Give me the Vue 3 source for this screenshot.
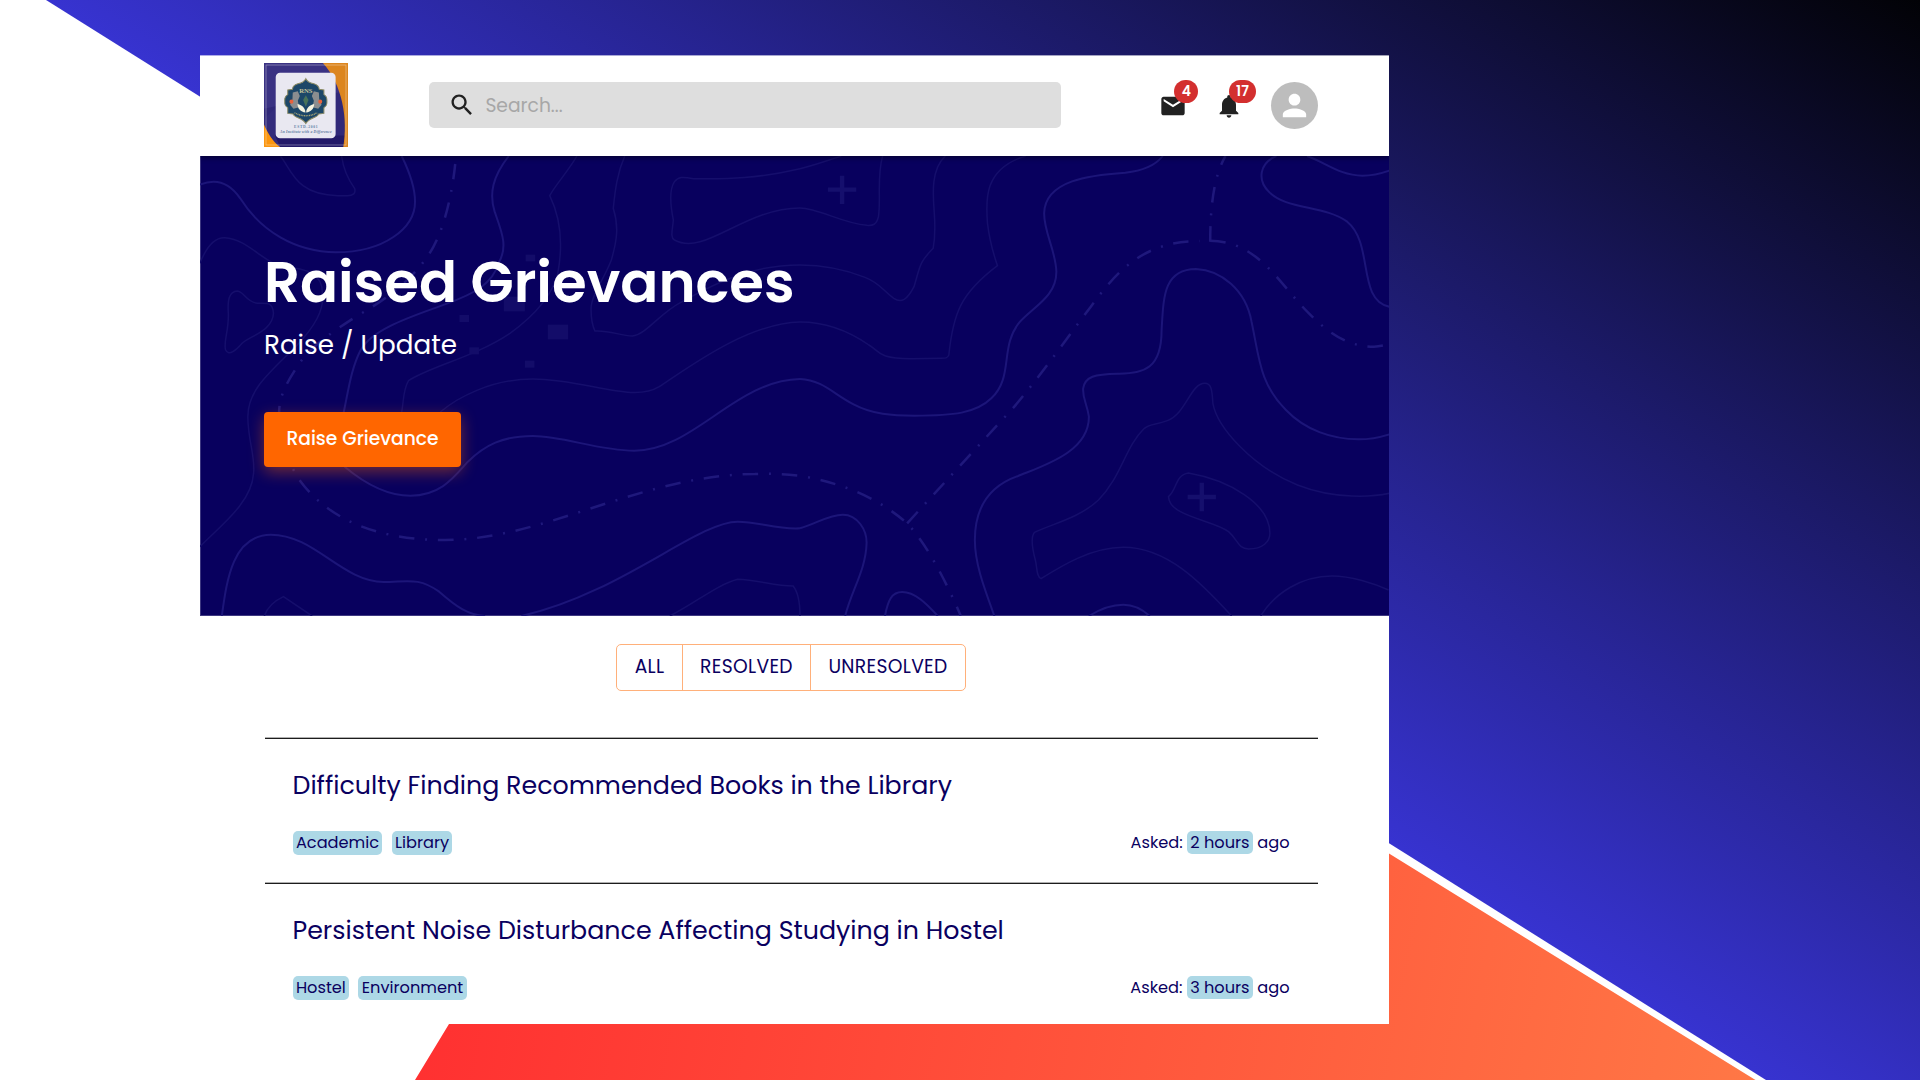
<script setup>
const filters = ['ALL', 'RESOLVED', 'UNRESOLVED']

const grievances = [
  {
    title: 'Difficulty Finding Recommended Books in the Library',
    tags: ['Academic', 'Library'],
    asked: '2 hours',
  },
  {
    title: 'Persistent Noise Disturbance Affecting Studying in Hostel',
    tags: ['Hostel', 'Environment'],
    asked: '3 hours',
  },
]
</script>

<template>
  <div class="page">
    <svg class="backdrop" width="1920" height="1080" viewBox="0 0 1920 1080" aria-hidden="true">
      <defs>
        <linearGradient id="night" gradientUnits="userSpaceOnUse" x1="1390" y1="844" x2="1920" y2="0">
          <stop offset="0" stop-color="#3733d0" />
          <stop offset="1" stop-color="#020206" />
        </linearGradient>
        <linearGradient id="sunset" gradientUnits="userSpaceOnUse" x1="430" y1="1020" x2="2190" y2="1360">
          <stop offset="0" stop-color="#ff3131" />
          <stop offset="1" stop-color="#ff914d" />
        </linearGradient>
      </defs>
      <polygon points="46,0 1920,0 1920,1080 1766,1080" fill="url(#night)" />
      <polygon points="449,1024 900,550 1389,853.5 1755.5,1080 415,1080" fill="url(#sunset)" />
    </svg>

    <main class="card">
      <header class="topbar">
        <svg class="logo" viewBox="27 24 251 250" preserveAspectRatio="none">
          <rect x="27" y="24" width="251" height="250" fill="#332c7c" />
          <path d="M27 24H205C225 45 245 75 255 110L27 160Z" fill="#433b8c" />
          <path d="M27 24H278V274H240V240H60V160L27 190Z" fill="#2b2374" opacity=".35" />
          <path d="M60 240H270V274H75Z" fill="#231a68" />
          <path d="M203 24H278V274H264C278 190 262 90 203 24Z" fill="#dc861f" />
          <path d="M27 207C38 232 52 256 75 274H27Z" fill="#fb960f" />
          <rect x="33" y="30" width="239" height="238" fill="none" stroke="#fff" stroke-opacity=".4" stroke-width="2.5" />
          <rect x="62" y="53" width="179" height="195" rx="13" fill="#e9e8f1" />
          <path d="M152 71C157 82 166 84 176 86C186 89 191 93 192 102L206 104V118C217 124 215 134 215 138C215 144 217 150 206 157V174L190 176C186 188 163 186 152 204C141 186 118 188 114 176L98 174V157C87 150 89 144 89 138C89 134 87 124 98 118V104L112 102C113 93 118 89 128 86C138 84 147 82 152 71Z" fill="#1d4768" stroke="#8b8a63" stroke-width="3" />
          <path d="M113 112L128 108L134 122L128 136L132 156L115 160L105 148L112 132ZM191 112L176 108L170 122L176 136L172 156L189 160L199 148L192 132Z" fill="#8a8d8f" />
          <circle cx="109" cy="139" r="6" fill="#e8613b" />
          <circle cx="195" cy="139" r="6" fill="#e8613b" />
          <path d="M152 120L160 134L152 154L144 134Z" fill="#49735a" />
          <path d="M127 146C142 150 150 158 151 171C136 170 128 160 127 146ZM177 146C162 150 154 158 153 171C168 170 176 160 177 146Z" fill="#f5f3df" />
          <path d="M118 172C140 184 164 184 186 172" fill="none" stroke="#aaa774" stroke-width="4" stroke-dasharray="3 2" />
          <text x="152" y="113" text-anchor="middle" class="logo-serif" font-size="20" fill="#c6c298">RNS</text>
          <text x="152" y="216" text-anchor="middle" class="logo-serif" font-size="11" fill="#6383a8" textLength="70">ESTD-2001</text>
          <text x="152" y="232" text-anchor="middle" class="logo-script" font-size="11" fill="#5b769c" textLength="154">An Institute with a Difference</text>
        </svg>

        <div class="search">
          <svg class="icon" viewBox="0 0 24 24"><path d="M15.5 14h-.79l-.28-.27C15.41 12.59 16 11.11 16 9.5 16 5.91 13.09 3 9.5 3S3 5.91 3 9.5 5.91 16 9.5 16c1.61 0 3.09-.59 4.23-1.57l.27.28v.79l5 4.99L20.49 19l-4.99-5zm-6 0C7.01 14 5 11.99 5 9.5S7.01 5 9.5 5 14 7.01 14 9.5 11.99 14 9.5 14z" /></svg>
          <span>Search...</span>
        </div>

        <div class="actions">
          <div class="action mail">
            <svg class="icon" viewBox="0 0 24 24"><path d="M20 4H4c-1.1 0-1.99.9-1.99 2L2 18c0 1.1.9 2 2 2h16c1.1 0 2-.9 2-2V6c0-1.1-.9-2-2-2zm0 4l-8 5-8-5V6l8 5 8-5v2z" /></svg>
            <span class="badge">4</span>
          </div>
          <div class="action bell">
            <svg class="icon" viewBox="0 0 24 24"><path d="M12 22c1.1 0 2-.9 2-2h-4c0 1.1.89 2 2 2zm6-6v-5c0-3.07-1.64-5.64-4.5-6.32V4c0-.83-.67-1.5-1.5-1.5s-1.5.67-1.5 1.5v.68C7.63 5.36 6 7.92 6 11v5l-2 2v1h16v-1l-2-2z" /></svg>
            <span class="badge wide">17</span>
          </div>
          <div class="avatar">
            <svg viewBox="0 0 24 24"><path d="M12 12c2.21 0 4-1.79 4-4s-1.79-4-4-4-4 1.79-4 4 1.79 4 4 4zm0 2c-2.67 0-8 1.34-8 4v2h16v-2c0-2.66-5.33-4-8-4z" /></svg>
          </div>
        </div>
      </header>

      <section class="hero">
        <svg class="contours" width="1189" height="460" viewBox="200 156 1189 460" aria-hidden="true">
          <g transform="translate(200 150) scale(.38265 .33333)">
            <g class="faint">
              <path d="M210 18C240 60 250 135 360 137L385 137C400 137 408 130 404 115C385 85 375 60 370 18" />
              <path d="M0 340C20 280 45 262 65 263C120 265 170 340 215 350C280 355 320 370 320 430C325 480 300 530 250 590C180 670 125 720 125 800C125 870 145 920 140 970C135 1060 50 1130 0 1190" />
              <path d="M98 423C75 425 72 450 74 490C76 540 60 580 67 600C75 620 95 600 110 580C125 560 190 545 192 490C190 455 175 460 150 460C120 455 115 425 98 423Z" />
              <path d="M985 18C965 60 925 110 914 137C945 210 948 290 935 370C920 440 870 500 810 550C720 620 600 650 545 692C530 720 532 760 527 786" />
              <path d="M1110 18C1090 70 1085 120 1080 175C1095 230 1090 270 1075 330C1055 390 1020 440 1022 480C1022 510 1025 525 1032 543C1070 540 1100 558 1130 558C1165 555 1200 490 1260 455C1360 390 1450 345 1568 345" />
              <path d="M1568 516C1430 520 1280 650 1200 710C1130 760 1010 688 870 687C760 687 670 745 628 786" />
              <path d="M1568 56C1460 85 1380 88 1290 86C1260 80 1250 80 1240 95C1225 120 1230 170 1237 210C1235 240 1228 262 1240 270C1320 320 1420 175 1568 174" />
              <path d="M168 1398C175 1375 190 1355 218 1340L293 1398" />
              <path d="M1228 1398C1300 1355 1350 1305 1405 1288C1460 1290 1500 1308 1550 1308C1562 1325 1568 1350 1568 1398" />
            </g>
            <g class="strong">
              <path d="M0 104C40 85 75 95 105 145C160 245 250 305 355 307C480 307 562 235 562 155C562 110 545 60 527 18" />
              <path d="M807 18C765 80 755 130 770 185C790 250 805 290 780 340C765 400 720 430 640 463C560 497 450 535 420 600C395 655 388 720 375 790C365 850 350 910 378 950C430 1000 490 1037 550 1037C630 1037 665 980 700 935C745 885 790 858 870 858C950 858 1040 902 1135 902C1290 902 1400 690 1568 687" />
              <path d="M57 1398C70 1290 85 1156 185 1154C300 1154 370 1295 480 1296C540 1296 570 1280 625 1325C670 1370 700 1395 745 1398" />
              <path d="M840 1398C1100 1330 1300 1115 1405 1115C1460 1115 1510 1140 1568 1135" />
            </g>
            <path class="route" d="M667 42C660 120 640 240 600 310C560 380 500 440 410 498C340 550 290 590 260 640C230 690 205 740 207 790C210 850 220 920 260 990C330 1100 450 1170 640 1170C900 1170 1150 975 1450 972C1490 970 1530 973 1568 977C1678 1000 1768 1040 1848 1120C1898 1180 1948 1290 1988 1397" />
            <g class="blocks">
              <rect x="851" y="314" width="25" height="20" />
              <rect x="794" y="440" width="55" height="44" />
              <rect x="678" y="495" width="25" height="21" />
              <rect x="909" y="524" width="53" height="44" />
              <rect x="704" y="592" width="25" height="21" />
              <rect x="849" y="632" width="25" height="21" />
            </g>
          </g>
          <g transform="translate(800 150) scale(.38265 .33333)">
            <g class="faint">
              <path d="M0 56C40 45 75 30 108 18" />
              <path d="M216 18C200 80 212 150 205 200C200 225 190 227 175 226C110 220 50 175 0 174" />
              <path d="M380 18C340 60 348 140 351 190C354 240 352 270 348 295C310 340 315 345 298 410C280 450 265 460 245 445C215 420 210 400 170 382C110 355 60 345 0 345" />
              <path d="M590 18C480 55 485 150 490 220C495 270 505 310 516 347C420 430 400 490 389 615C385 625 380 625 370 625L290 626C200 625 210 605 180 585C130 545 70 516 0 516" />
              <path d="M1540 1030C1500 1040 1400 1050 1300 1005C1180 950 1090 830 1079 760C1077 720 1075 700 1058 700C1020 700 1010 790 960 812C930 825 915 820 900 835C850 890 840 980 780 1050C730 1105 650 1125 613 1147C603 1160 608 1200 615 1230C620 1250 617 1280 630 1286C680 1250 760 1192 845 1192C960 1192 1050 1300 1128 1398" />
              <path d="M1015 969C980 975 985 1020 963 1040C965 1100 1080 1110 1120 1145C1145 1170 1145 1197 1172 1197C1210 1197 1228 1175 1228 1150C1228 1060 1120 990 1015 969Z" />
              <path d="M1204 1398C1240 1330 1310 1278 1390 1278C1440 1278 1500 1300 1538 1320" />
            </g>
            <g class="strong">
              <path d="M0 687C60 690 90 735 140 763C190 793 240 797 300 797C400 797 460 790 500 745C560 680 520 590 575 515C610 470 670 440 670 365C668 300 638 250 638 190C640 90 760 75 850 68C900 62 930 45 948 18" />
              <path d="M508 1398C480 1310 457 1240 457 1170C457 1080 490 1010 570 978C640 945 755 905 755 800C750 760 738 745 740 715C745 680 770 672 830 671C900 672 945 655 945 540C950 440 950 358 1035 357C1100 360 1165 420 1180 515C1200 620 1200 700 1270 780C1320 840 1390 868 1460 868C1490 868 1515 862 1540 853" />
              <path d="M1245 18C1200 40 1195 90 1225 125C1270 180 1370 165 1430 215C1500 280 1455 450 1540 470" />
              <path d="M1325 18C1370 35 1410 77 1470 77C1500 77 1520 70 1540 62" />
              <path d="M0 1135C45 1120 75 1094 112 1094C150 1094 175 1140 174 1180C172 1260 135 1320 118 1398" />
              <path d="M222 1398C230 1350 240 1326 267 1326C300 1326 330 1360 360 1398" />
              <path d="M755 1398C780 1380 810 1364 845 1364C875 1364 895 1378 914 1398" />
            </g>
            <path class="route" d="M280 1120C400 970 480 870 560 770C640 660 700 560 760 470C830 360 900 273 1045 273" />
            <path class="route" d="M1072 272C1200 275 1250 400 1330 490C1390 560 1440 590 1500 590C1515 590 1530 585 1540 582" />
            <path class="route" d="M1072 275C1072 180 1080 80 1112 18" />
            <path class="cross" d="M73 119H147M110 77V162M1013 1041H1087M1050 998V1084" />
          </g>
        </svg>

        <div class="hero-copy">
          <h1>Raised Grievances</h1>
          <p>Raise / Update</p>
          <button type="button">Raise Grievance</button>
        </div>
      </section>

      <section class="content">
        <div class="filters">
          <button v-for="f in filters" :key="f" type="button" :class="f.toLowerCase()">{{ f }}</button>
        </div>

        <article v-for="g in grievances" :key="g.title" class="item">
          <h2>{{ g.title }}</h2>
          <div class="meta">
            <div class="tags">
              <span v-for="t in g.tags" :key="t" class="tag">{{ t }}</span>
            </div>
            <div class="asked">
              <span>Asked:</span>
              <span class="time">{{ g.asked }}</span>
              <span>ago</span>
            </div>
          </div>
        </article>
      </section>
    </main>
  </div>
</template>

<style>
body {
  margin: 0;
  background: #fff;
}
</style>

<style scoped>
.page {
  position: relative;
  box-sizing: border-box;
  width: 1920px;
  height: 1080px;
  padding: 56px 0 0 200px;
  overflow: hidden;
  background: #fff;
  font-family: Poppins, Inter, 'Noto Sans', sans-serif;
}
.backdrop {
  position: absolute;
  inset: 0;
}
.card {
  position: relative;
  width: 1189px;
  height: 968px;
  background: #fff;
  box-shadow: 0 -1px 0 rgba(255, 255, 255, 0.6);
}
.topbar {
  position: relative;
  z-index: 1;
  box-sizing: border-box;
  display: flex;
  align-items: center;
  height: 100px;
  padding: 0 71px 0 64px;
  background: #fff;
  box-shadow: 0 2px 5px rgba(0, 0, 0, 0.45);
  clip-path: inset(0 0 -10px 0);
}
.logo {
  width: 84px;
  height: 84px;
  margin-top: -2px;
}
.logo-serif {
  font-family: 'Liberation Serif', serif;
  font-weight: 700;
}
.logo-script {
  font-family: 'Liberation Serif', serif;
  font-style: italic;
  font-weight: 700;
}
.search {
  box-sizing: border-box;
  display: flex;
  align-items: center;
  width: 632px;
  height: 46px;
  margin: -2px 0 0 81.4px;
  padding-left: 18.6px;
  border-radius: 5px;
  background: #dedede;
  color: #a7a7a7;
  font-size: 18.7px;
}
.search span {
  margin-left: 9.4px;
}
.icon {
  width: 28px;
  height: 28px;
  fill: #212121;
}
.actions {
  display: flex;
  align-items: center;
  margin: -1px 0 0 97.6px;
}
.action {
  position: relative;
  display: flex;
}
.bell {
  margin-left: 28px;
}
.badge {
  position: absolute;
  top: -12px;
  left: 15.5px;
  width: 24px;
  height: 23px;
  border-radius: 12px;
  background: #d32f2f;
  color: #fff;
  font-size: 14px;
  font-weight: 600;
  line-height: 23px;
  text-align: center;
}
.badge.wide {
  left: 14px;
  width: 27px;
}
.avatar {
  display: flex;
  align-items: center;
  justify-content: center;
  width: 47px;
  height: 47px;
  margin-left: 28px;
  border-radius: 50%;
  background: #bdbdbd;
}
.avatar svg {
  width: 35px;
  height: 35px;
  fill: #fff;
}
.hero {
  position: relative;
  height: 460px;
  overflow: hidden;
  background: #08005e;
  box-shadow: inset 1px -1px 0 rgba(255, 255, 255, 0.22);
}
.contours {
  position: absolute;
  inset: 0;
}
.contours path {
  fill: none;
  vector-effect: non-scaling-stroke;
}
.faint path {
  stroke: #150e6c;
  stroke-width: 1.5;
}
.strong path {
  stroke: #1c1579;
  stroke-width: 2;
}
.contours .route {
  stroke: #1f187c;
  stroke-width: 2.5;
  stroke-dasharray: 15.5 10.8 2 10.8;
}
.contours .cross {
  stroke: #150f6d;
  stroke-width: 4.4;
}
.blocks {
  fill: #130c69;
}
.hero-copy {
  position: relative;
  display: flex;
  flex-direction: column;
  align-items: flex-start;
  padding: 92px 0 0 64px;
  color: #fff;
}
h1 {
  margin: 0;
  font-size: 56.2px;
  font-weight: 600;
  line-height: 69px;
}
.hero-copy p {
  margin: 10px 0 0;
  font-size: 26.2px;
  line-height: 36px;
}
.hero-copy button {
  width: 197px;
  height: 55px;
  margin-top: 49px;
  padding: 0 0 2px;
  border: 0;
  border-radius: 4px;
  background: #ff6600;
  box-shadow: 0 5px 16px rgba(255, 102, 0, 0.42);
  color: #fff;
  font: inherit;
  font-size: 18.7px;
  font-weight: 500;
}
.content {
  padding: 28px 71px 0 65px;
  color: #0a005f;
}
.filters {
  box-sizing: border-box;
  display: flex;
  width: 350px;
  height: 47px;
  margin: 0 0 47px 351px;
  border: 1px solid #ffb07a;
  border-radius: 5px;
}
.filters button {
  padding: 0 0 2px;
  border: 0;
  border-right: 1px solid #ffb07a;
  background: none;
  color: inherit;
  font: inherit;
  font-size: 18.7px;
  letter-spacing: 0.33px;
}
.filters .all {
  width: 66px;
}
.filters .resolved {
  width: 128px;
}
.filters .unresolved {
  flex: 1;
  border-right: 0;
}
.item {
  box-sizing: border-box;
  height: 145px;
  padding: 28px 28.5px 0 27.5px;
  border-top: 1px solid #1c1c1c;
  box-shadow: 0 -1px 0 #b0b0b0;
}
h2 {
  margin: 0;
  font-size: 25.32px;
  font-weight: 400;
  line-height: 36px;
  white-space: nowrap;
}
.meta {
  display: flex;
  justify-content: space-between;
  margin-top: 28px;
  font-size: 16.2px;
}
.tags {
  display: flex;
  gap: 9.2px;
}
.tag {
  height: 24px;
  padding: 0 3.4px;
  border-radius: 5px;
  background: #add8e6;
  line-height: 23px;
}
.asked {
  display: flex;
  gap: 4.2px;
  line-height: 23px;
}
.time {
  height: 23px;
  padding: 0 3.5px;
  border-radius: 5px;
  background: #add8e6;
}
</style>
